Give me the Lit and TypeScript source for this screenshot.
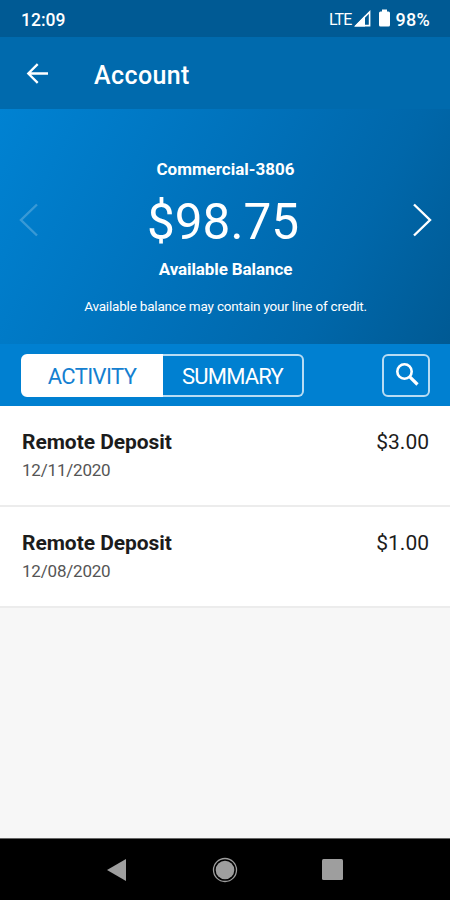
import { LitElement, html, css } from "lit";
import { customElement, state } from "lit/decorators.js";

interface Transaction {
  title: string;
  date: string;
  amount: string;
}

@customElement("app-root")
export class AppRoot extends LitElement {
  @state() private transactions: Transaction[] = [
    { title: "Remote Deposit", date: "12/11/2020", amount: "$3.00" },
    { title: "Remote Deposit", date: "12/08/2020", amount: "$1.00" },
  ];

  static styles = css`
    :host {
      display: flex;
      flex-direction: column;
      box-sizing: border-box;
      width: 450px;
      height: 900px;
      overflow: hidden;
      background: #f7f7f7;
      font-family: Roboto, "Liberation Sans", sans-serif;
      color: #fff;
      white-space: nowrap;
    }
    * {
      box-sizing: border-box;
    }
    svg {
      display: block;
      flex: none;
    }
    button {
      margin: 0;
      padding: 0;
      border: 0;
      background: none;
      color: inherit;
      font: inherit;
    }
    .status {
      display: flex;
      align-items: center;
      height: 37px;
      padding: 2px 20px 0 21px;
      background: #005a94;
      font-size: 17.5px;
      font-weight: 500;
    }
    .clock {
      flex: 1;
    }
    .lte {
      font-size: 16px;
      font-weight: 400;
      letter-spacing: -0.9px;
      margin-right: 3px;
      padding-bottom: 1px;
    }
    .signal {
      margin: -2px 8px 0 0;
    }
    .battery {
      margin: -3px 5px 0 0;
    }
    .percent {
      font-size: 18px;
      letter-spacing: 0.3px;
    }
    .appbar {
      display: flex;
      align-items: center;
      height: 72px;
      padding: 0 26px;
      background: #006aad;
    }
    .title {
      margin: 5px 0 0 46px;
      font-size: 25px;
      font-weight: 500;
      letter-spacing: 0.4px;
      line-height: 30px;
    }
    .balance {
      display: flex;
      align-items: flex-start;
      justify-content: space-between;
      height: 235px;
      padding: 0 18px 0 19px;
      background: linear-gradient(118deg, #0082d2 0%, #0078c4 28%, #006fb7 52%, #0067aa 74%, #005a94 100%);
    }
    .chevron {
      margin-top: 93px;
    }
    .dim {
      opacity: 0.22;
    }
    .details {
      display: flex;
      flex-direction: column;
      align-items: center;
      height: 235px;
      padding-top: 50px;
    }
    .label {
      font-size: 17px;
      font-weight: 700;
      line-height: 20px;
    }
    .available {
      letter-spacing: -0.1px;
    }
    .sum {
      margin: 16px 5px 9px 0;
      font-size: 49.5px;
      line-height: 55px;
    }
    .note {
      margin-top: 19px;
      font-size: 13.5px;
      letter-spacing: -0.19px;
      line-height: 16px;
    }
    .tools {
      display: flex;
      align-items: center;
      justify-content: space-between;
      height: 62px;
      padding: 0 20px 0 21px;
      background: #0080d1;
    }
    .tabs {
      display: flex;
      width: 283px;
      height: 43px;
    }
    .tab {
      flex: 1;
      padding-top: 2px;
      border: 2px solid #b8dcf3;
      border-left: 0;
      border-radius: 0 6px 6px 0;
      font-size: 22px;
      letter-spacing: -0.8px;
    }
    .active {
      flex: none;
      width: 142px;
      border: 2px solid #fff;
      border-radius: 6px 0 0 6px;
      background: #fff;
      color: #1480d0;
      letter-spacing: -0.6px;
    }
    .search {
      display: flex;
      align-items: center;
      justify-content: center;
      width: 48px;
      height: 43px;
      padding: 0 0 2px 2px;
      border: 2px solid #b8dcf3;
      border-radius: 6px;
    }
    .row {
      display: flex;
      justify-content: space-between;
      height: 101px;
      padding: 24px 21px 0 22px;
      background: #fff;
      border-bottom: 2px solid #ececec;
      color: #1c1c1c;
    }
    .name {
      font-size: 21px;
      font-weight: 700;
      line-height: 25px;
      letter-spacing: -0.05px;
    }
    .date {
      margin-top: 5px;
      color: #555;
      font-size: 17px;
      letter-spacing: -0.2px;
      line-height: 20px;
    }
    .amount {
      font-size: 21px;
      line-height: 25px;
    }
    .spacer {
      flex: 1;
    }
    .nav {
      display: flex;
      align-items: center;
      height: 62px;
      padding-left: 106px;
      background: #000;
      border-top: 1px solid #666;
    }
    .home {
      margin-left: 86px;
    }
    .recent {
      margin-left: 84px;
    }
  `;

  render() {
    return html`
      <div class="status">
        <span class="clock">12:09</span>
        <span class="lte">LTE</span>
        <svg class="signal" width="17" height="17" viewBox="0 0 17 17">
          <path d="M15.600 2V15.600H2Z" fill="none" stroke="#fff" stroke-width="1.600" />
          <path d="M11 5.500V16.400H0.500Z" fill="#fff" />
        </svg>
        <svg class="battery" width="11" height="18" viewBox="0 0 11 18">
          <path d="M3 0.5h5v2h1.5q1.5 0 1.5 1.5v12q0 1.5-1.5 1.5h-8Q0 17.5 0 16V4q0-1.5 1.5-1.5H3Z" fill="#fff" />
        </svg>
        <span class="percent">98%</span>
      </div>

      <header class="appbar">
        <svg width="22" height="22" viewBox="0 0 22 22" fill="none" stroke="#fff" stroke-width="2.3">
          <path d="M22 11.5H2.5M11.7 2.1L2.3 11.5l9.4 9.4" />
        </svg>
        <div class="title">Account</div>
      </header>

      <section class="balance">
        <svg class="chevron dim" width="20" height="36" viewBox="0 0 20 36" fill="none" stroke="#fff" stroke-width="2.4">
          <path d="M18 2.5L2 18l16 15.5" />
        </svg>
        <div class="details">
          <div class="label">Commercial-3806</div>
          <div class="sum">$98.75</div>
          <div class="label available">Available Balance</div>
          <div class="note">Available balance may contain your line of credit.</div>
        </div>
        <svg class="chevron" width="20" height="36" viewBox="0 0 20 36" fill="none" stroke="#fff" stroke-width="2.4">
          <path d="M2 2.5L18 18 2 33.5" />
        </svg>
      </section>

      <div class="tools">
        <div class="tabs">
          <button class="tab active">ACTIVITY</button>
          <button class="tab">SUMMARY</button>
        </div>
        <button class="search" aria-label="Search">
          <svg width="24" height="24" viewBox="0 0 24 24" fill="none" stroke="#fff">
            <circle cx="9.5" cy="9.5" r="7.2" stroke-width="2.6" />
            <path d="M14.3 14.3L22.5 22.5" stroke-width="3.2" />
          </svg>
        </button>
      </div>

      ${this.transactions.map(
        (t) => html`
          <div class="row">
            <div>
              <div class="name">${t.title}</div>
              <div class="date">${t.date}</div>
            </div>
            <div class="amount">${t.amount}</div>
          </div>
        `
      )}
      <div class="spacer"></div>

      <nav class="nav">
        <svg width="20" height="24" viewBox="0 0 20 24">
          <path d="M1 12L20 1v22Z" fill="#9e9e9e" />
        </svg>
        <svg class="home" width="26" height="26" viewBox="0 0 26 26">
          <circle cx="13" cy="13" r="11.5" fill="none" stroke="#9e9e9e" stroke-width="1.3" />
          <circle cx="13" cy="13" r="9.3" fill="#9e9e9e" />
        </svg>
        <svg class="recent" width="21" height="21" viewBox="0 0 21 21">
          <rect width="21" height="21" rx="1.5" fill="#9e9e9e" />
        </svg>
      </nav>
    `;
  }
}
